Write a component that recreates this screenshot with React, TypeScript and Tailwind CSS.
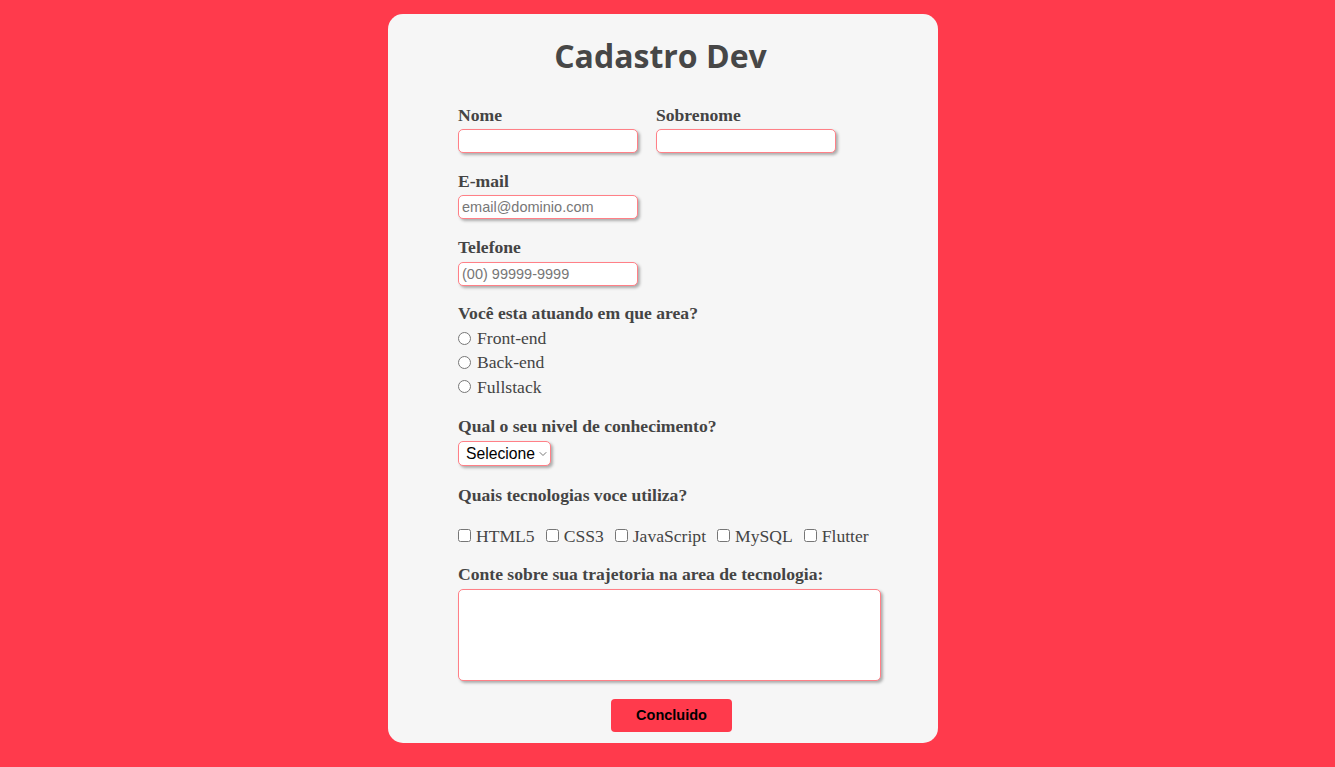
import { ChevronDown } from 'lucide-react';

const serif = "font-['Liberation_Serif','Times_New_Roman',serif]";

const inputCls =
    "block h-[24px] w-[180px] rounded-[5px] border border-[#ff8087] bg-white px-[3px] text-[14.5px] font-['Liberation_Sans',Arial,sans-serif] text-black placeholder:text-[#777] shadow-[2px_2px_3px_rgba(0,0,0,0.3)] outline-none";

function Label({ children }: { children: React.ReactNode }) {
    return <div className="h-5 text-[17.6px] font-bold leading-5 text-[#444]">{children}</div>;
}

export default function App() {
    const areas = ['Front-end', 'Back-end', 'Fullstack'];
    const techs = ['HTML5', 'CSS3', 'JavaScript', 'MySQL', 'Flutter'];

    return (
        <div className={`min-h-screen bg-[#ff3a4c] flex justify-center pt-[14px] pb-[24px] pr-[9px] ${serif}`}>
            <div className="w-[550px] h-[729px] rounded-[15px] bg-[#f6f6f6] pl-[70px] pr-[57px]">
                {/* Title */}
                <h1 className="pt-[22px] h-[80px] text-center text-[32px] font-bold leading-[40px] text-[#474747] font-['Open_Sans','DejaVu_Sans',sans-serif] -ml-[18px]">
                    Cadastro Dev
                </h1>

                {/* Nome / Sobrenome */}
                <div className="mt-[11px] flex gap-[18px]">
                    <div>
                        <Label>Nome</Label>
                        <input className={`${inputCls} mt-1`} />
                    </div>
                    <div>
                        <Label>Sobrenome</Label>
                        <input className={`${inputCls} mt-1`} />
                    </div>
                </div>

                <div className="mt-[18px]">
                    <Label>E-mail</Label>
                    <input className={`${inputCls} mt-1`} placeholder="email@dominio.com" />
                </div>

                <div className="mt-[18px]">
                    <Label>Telefone</Label>
                    <input className={`${inputCls} mt-[5px]`} placeholder="(00) 99999-9999" />
                </div>

                {/* Area */}
                <div className="mt-[17px]">
                    <Label>Você esta atuando em que area?</Label>
                    <div className="mt-[3px]">
                        {areas.map((a) => (
                            <label key={a} className="flex h-[24.3px] items-center gap-[6px] text-[17.6px] leading-5 text-[#444]">
                                <input type="radio" name="area" className="m-0 h-[13px] w-[13px]" />
                                {a}
                            </label>
                        ))}
                    </div>
                </div>

                {/* Nivel */}
                <div className="mt-[17px]">
                    <Label>Qual o seu nivel de conhecimento?</Label>
                    <div className="relative mt-[5px] w-[93px]">
                        <select className="block h-[25px] w-[93px] appearance-none rounded-[5px] border border-[#ff8087] bg-white pl-[7px] text-[15.7px] leading-[23px] text-black font-['Liberation_Sans',Arial,sans-serif] shadow-[2px_2px_3px_rgba(0,0,0,0.3)] outline-none">
                            <option>Selecione</option>
                            <option>Junior</option>
                            <option>Pleno</option>
                            <option>Senior</option>
                        </select>
                        <ChevronDown className="pointer-events-none absolute right-[2px] top-[7px] h-[12px] w-[12px] text-[#777]" strokeWidth={2} />
                    </div>
                </div>

                {/* Tecnologias */}
                <div className="mt-[19px]">
                    <Label>Quais tecnologias voce utiliza?</Label>
                    <div className="mt-[21px] flex h-5 items-start text-[17.6px] leading-5 text-[#444]">
                        {techs.map((t) => (
                            <label key={t} className="mr-[11px] flex items-start gap-[5px]">
                                <input type="checkbox" className="m-0 mt-[3px] h-[13px] w-[13px]" />
                                {t}
                            </label>
                        ))}
                    </div>
                </div>

                {/* Trajetoria */}
                <div className="mt-[18px]">
                    <Label>Conte sobre sua trajetoria na area de tecnologia:</Label>
                    <textarea className="mt-[5px] block h-[92px] w-[423px] resize-none rounded-[5px] border border-[#ff8087] bg-white shadow-[2px_2px_3px_rgba(0,0,0,0.3)] outline-none" />
                </div>

                <button className="mt-[18px] ml-[153px] h-[33px] w-[121px] rounded-[4px] bg-[#ff3a4c] text-[14.5px] font-bold text-black font-['Liberation_Sans',Arial,sans-serif]">
                    Concluido
                </button>
            </div>
        </div>
    );
}
